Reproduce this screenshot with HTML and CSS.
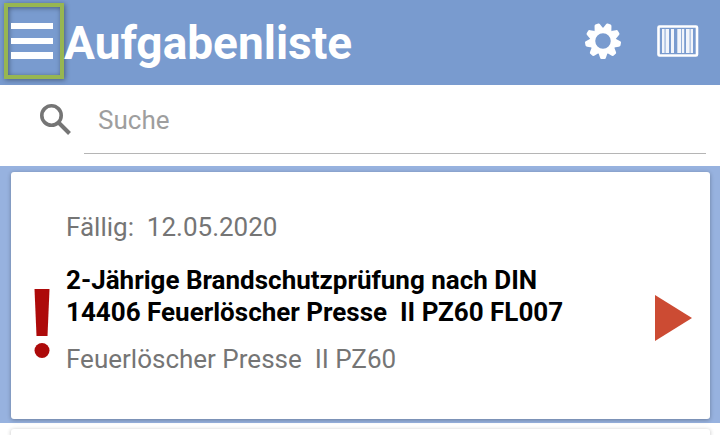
FILE: index.html
```
<!DOCTYPE html>
<html lang="de">
<head>
    <meta charset="UTF-8">
    <meta name="viewport" content="width=device-width, initial-scale=1.0">
    <title>Aufgabenliste</title>
    <link rel="stylesheet" href="styles.css">
</head>
<body>
    <header class="toolbar">
        <button class="menu-button" type="button" aria-label="Menü">
            <svg width="42" height="36" viewBox="0 0 42 36">
                <path d="M0 0h42v6H0zM0 15h42v6H0zM0 29h42v7H0z" fill="#fff"/>
            </svg>
        </button>
        <h1>Aufgabenliste</h1>
        <button class="icon-button" type="button" aria-label="Einstellungen">
            <svg width="36" height="36" viewBox="-18 -18 36 36" fill="#fff">
                <circle r="10.500" fill="none" stroke="#fff" stroke-width="5.500"/>
                <path id="tooth" d="M-4.500 12L-3 16.500Q-2.600 18 -1.500 18H1.500Q2.600 18 3 16.500L4.500 12z"/>
                <use href="#tooth" transform="rotate(40)"/>
                <use href="#tooth" transform="rotate(80)"/>
                <use href="#tooth" transform="rotate(120)"/>
                <use href="#tooth" transform="rotate(160)"/>
                <use href="#tooth" transform="rotate(200)"/>
                <use href="#tooth" transform="rotate(240)"/>
                <use href="#tooth" transform="rotate(280)"/>
                <use href="#tooth" transform="rotate(320)"/>
            </svg>
        </button>
        <button class="icon-button" type="button" aria-label="Barcode scannen">
            <svg width="42" height="32" viewBox="0 0 42 32">
                <rect x="1.5" y="1.5" width="38.5" height="29" rx="1" fill="none" stroke="#fff" stroke-width="2.6"/>
                <path d="M5 4h2.600v24H5zM8.500 4h3.500v24H8.500zM14 4h3v24h-3zM20.300 4h3.700v24h-3.700zM24.800 4h2.400v24h-2.400zM29 4h3.700v24H29zM33.500 4h2.500v24h-2.500z" fill="#fff" opacity="0.9"/>
            </svg>
        </button>
    </header>

    <form class="search">
        <label for="search" aria-label="Suche">
            <svg width="32" height="32" viewBox="0 0 32 32" fill="none" stroke="#757575">
                <circle cx="11.500" cy="11.500" r="9.700" stroke-width="3.600"/>
                <path d="M19 19l10.500 10.500" stroke-width="4"/>
            </svg>
        </label>
        <input id="search" type="text" placeholder="Suche">
    </form>

    <main>
        <section class="row row-active">
            <article class="card">
                <svg class="priority" width="16" height="70" viewBox="0 0 16 70" fill="#ad0a0a">
                    <path d="M0.500 0h15l-2 47h-11z"/>
                    <circle cx="8" cy="61.500" r="7.500"/>
                </svg>
                <div class="task">
                    <p>Fällig:  12.05.2020</p>
                    <h2>2-Jährige Brandschutzprüfung nach DIN 14406 Feuerlöscher Presse  II PZ60 FL007</h2>
                    <p>Feuerlöscher Presse  II PZ60</p>
                </div>
                <button class="open-button" type="button" aria-label="Öffnen">
                    <svg width="37" height="46" viewBox="0 0 37 46">
                        <path d="M0 0l37 23L0 46z" fill="#cc4b33"/>
                    </svg>
                </button>
            </article>
        </section>
        <section class="row">
            <article class="card"></article>
        </section>
    </main>
</body>
</html>
```
FILE: styles.css
```
* {
    box-sizing: border-box;
}

body {
    margin: 0;
    background-color: #fff;
    font-family: Roboto, "Liberation Sans", sans-serif;
    font-size: 26px;
    color: #757575;
}

button {
    display: flex;
    align-items: center;
    justify-content: center;
    padding: 0;
    border: none;
    background: none;
}

h1, h2, p {
    margin: 0;
}

.toolbar {
    display: flex;
    align-items: center;
    height: 85px;
    padding: 0 21px 3px 4px;
    background-color: #799bcf;
}

.menu-button {
    width: 60px;
    height: 76px;
    padding-right: 4px;
    border: 4px solid #97b651;
    box-shadow: 1px 1px 5px rgba(0, 0, 0, 0.4), inset 1px 1px 5px rgba(0, 0, 0, 0.4);
}

.toolbar h1 {
    flex: 1;
    padding-top: 3px;
    font-size: 46px;
    line-height: 54px;
    font-weight: bold;
    color: #fff;
}

.icon-button {
    margin-left: 36px;
}

.search {
    display: flex;
    align-items: center;
    height: 81px;
    padding: 0 14px 12px 40px;
}

.search label {
    display: flex;
    width: 44px;
}

.search input {
    flex: 1;
    min-width: 0;
    height: 69px;
    padding: 2px 14px 0;
    border: none;
    border-bottom: 1px solid #b5b5b5;
    outline: none;
    background: none;
    font: inherit;
    color: #333;
}

.search input::placeholder {
    color: #9e9e9e;
}

.row {
    padding: 6px 10px 4px 11px;
}

.row-active {
    background-color: #97b2df;
}

.card {
    display: flex;
    align-items: center;
    border-radius: 3px;
    background-color: #fff;
    box-shadow: 0 1px 4px rgba(0, 0, 0, 0.3);
}

.row-active .card {
    padding: 39px 18px 44px 23px;
}

.row:last-child .card {
    height: 6px;
    border-radius: 3px 3px 0 0;
}

.row:last-child {
    padding-bottom: 0;
}

.priority {
    margin-top: 62px;
}

.task {
    flex: 1;
    padding: 0 60px 0 16px;
    line-height: 32px;
}

.task h2,
.task p {
    white-space: pre-wrap;
}

.task h2 {
    margin: 21px 0 15px;
    font-size: 26px;
    font-weight: bold;
    color: #000;
}

.open-button {
    margin-top: 50px;
}
```
